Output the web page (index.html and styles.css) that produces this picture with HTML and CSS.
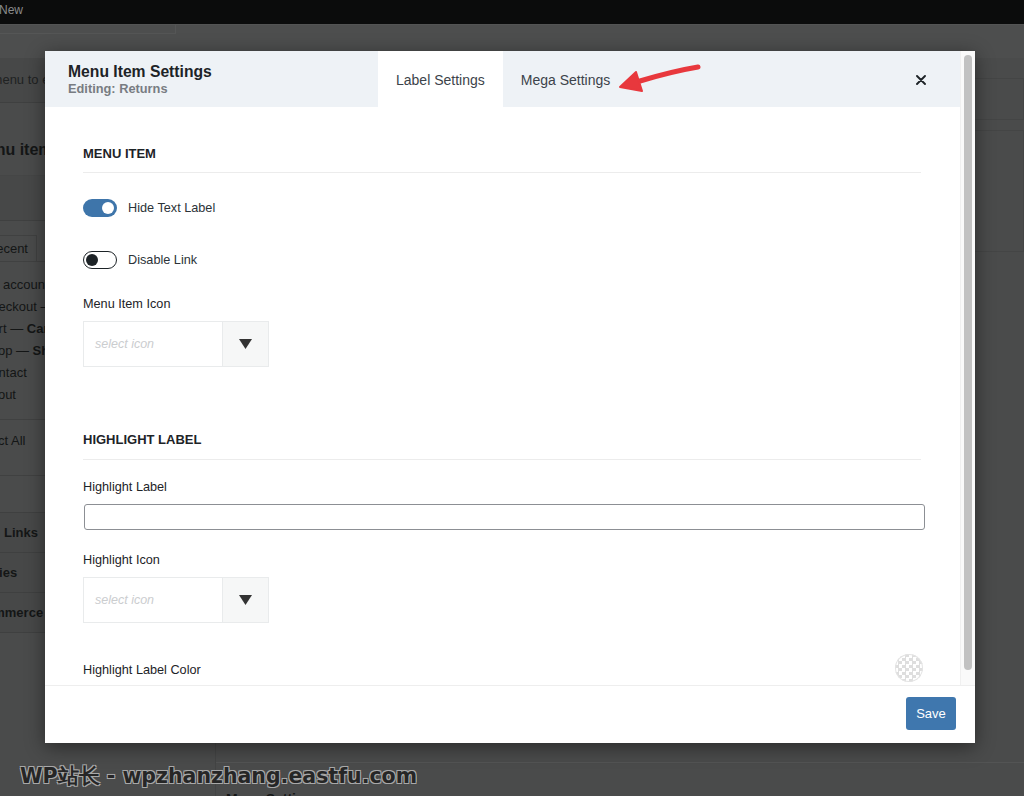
FILE: index.html
```html
<!DOCTYPE html>
<html lang="en">
<head>
    <meta charset="UTF-8">
    <meta name="viewport" content="width=device-width, initial-scale=1.0">
    <title>Menu Item Settings</title>
    <link rel="stylesheet" href="styles.css">
</head>
<body>
    <div class="admin-bar"><span>New</span></div>

    <div class="wp-page">
        <div class="screen-band"><div class="band-box"></div></div>
        <div class="wp-columns">
            <aside class="side">
                <div class="side-row select-row"><span>Select a menu to edit</span></div>
                <div class="side-head"><span>Add menu items</span></div>
                <div class="side-row spacer"></div>
                <div class="side-tabs"><span class="tab-recent">Most Recent</span></div>
                <ul class="page-list">
                    <li>My account</li>
                    <li>Checkout — Checkout</li>
                    <li>Cart — <b>Cart</b></li>
                    <li>Shop — <b>Shop</b></li>
                    <li>Contact</li>
                    <li>About</li>
                </ul>
                <div class="select-all"><span>Select All</span></div>
                <div class="acc first"><span class="acc-links">Custom Links</span></div>
                <div class="acc"><span class="acc-cats">Categories</span></div>
                <div class="acc"><span class="acc-woo">WooCommerce</span></div>
            </aside>
            <main class="edit">
                <div class="edit-box top"></div>
                <div class="edit-box mid"></div>
                <div class="edit-bottom"><span>Mega Settings</span></div>
            </main>
        </div>
    </div>

    <div class="modal">
        <div class="modal-main">
            <div class="modal-scroll">
                <div class="modal-head">
                    <div class="modal-title">
                        <div class="title">Menu Item Settings</div>
                        <div class="subtitle">Editing: Returns</div>
                    </div>
                    <div class="tabs">
                        <div class="tab active">Label Settings</div>
                        <div class="tab">Mega Settings</div>
                    </div>
                    <button class="close" aria-label="Close">
                        <svg width="10" height="10" viewBox="0 0 10 10"><path d="M1 1L9 9M9 1L1 9" stroke="#1d2327" stroke-width="1.9" stroke-linecap="round"/></svg>
                    </button>
                </div>

                <div class="modal-body">
                    <h4 class="section">MENU ITEM</h4>

                    <div class="toggle-row first-toggle">
                        <span class="toggle on"><span class="knob"></span></span>
                        <span>Hide Text Label</span>
                    </div>
                    <div class="toggle-row second-toggle">
                        <span class="toggle off"><span class="knob"></span></span>
                        <span>Disable Link</span>
                    </div>

                    <div class="field-label icon-label">Menu Item Icon</div>
                    <div class="icon-select">
                        <div class="icon-input">select icon</div>
                        <div class="icon-arrow">
                            <svg width="13" height="10" viewBox="0 0 13 10"><path d="M0 0H13L6.5 10Z" fill="#333"/></svg>
                        </div>
                    </div>

                    <h4 class="section highlight">HIGHLIGHT LABEL</h4>

                    <div class="field-label after-section">Highlight Label</div>
                    <input class="text-input" type="text">

                    <div class="field-label after-input">Highlight Icon</div>
                    <div class="icon-select">
                        <div class="icon-input">select icon</div>
                        <div class="icon-arrow">
                            <svg width="13" height="10" viewBox="0 0 13 10"><path d="M0 0H13L6.5 10Z" fill="#333"/></svg>
                        </div>
                    </div>

                    <div class="color-row">
                        <span class="field-label">Highlight Label Color</span>
                        <span class="swatch"></span>
                    </div>
                </div>
            </div>
            <div class="scroll-track"><div class="scroll-thumb"></div></div>
        </div>
        <div class="modal-foot">
            <button class="save">Save</button>
        </div>
    </div>

    <svg class="pointer" width="100" height="44" viewBox="0 0 100 44">
        <path d="M88 11 C70 14 50 19 30 25" stroke="#e8383d" stroke-width="5" fill="none" stroke-linecap="round"/>
        <path d="M10 31 L26 16 L32 35 Z" fill="#e8383d" stroke="#e8383d" stroke-width="2" stroke-linejoin="round"/>
    </svg>

    <div class="watermark">WP站长 - wpzhanzhang.eastfu.com</div>
</body>
</html>
```
FILE: styles.css
```css
html, body {
    margin: 0;
    padding: 0;
}
body {
    width: 1024px;
    height: 796px;
    overflow: hidden;
    background-color: #4a4b4b;
    font-family: "Liberation Sans", Arial, sans-serif;
    color: #1d2327;
    position: relative;
}

/* dimmed admin page behind the modal */
.admin-bar {
    height: 24px;
    background-color: #0b0c0c;
    color: #8a8b8b;
    font-size: 12px;
    line-height: 20px;
}
.admin-bar span {
    margin-left: -1px;
}
.screen-band {
    height: 33px;
    background-color: #4d4e4e;
    border-top: 1px solid #535454;
}
.band-box {
    width: 175px;
    height: 8px;
    border-bottom: 1px solid #555656;
    border-right: 1px solid #555656;
}
.wp-columns {
    display: flex;
}
.side {
    width: 215px;
    border-right: 1px solid #434444;
    color: #141616;
    font-size: 13px;
}
.side-row {
    border-bottom: 1px solid #3f4040;
}
.select-row {
    height: 44px;
    line-height: 44px;
    background-color: #474848;
}
.select-row span {
    margin-left: -59px;
    color: #202222;
}
.side-head {
    height: 72px;
    line-height: 94px;
    font-size: 16px;
    font-weight: bold;
    border-bottom: 1px solid #454646;
}
.side-head span {
    margin-left: -63px;
}
.spacer {
    height: 44px;
    background-color: #474848;
}
.side-tabs {
    height: 40px;
    padding-top: 14px;
    box-sizing: border-box;
}
.tab-recent {
    display: inline-block;
    margin-left: -54px;
    padding: 4px 8px;
    border: 1px solid #404141;
    border-bottom: none;
    line-height: 18px;
}
.page-list {
    list-style: none;
    margin: 0;
    padding: 12px 0 8px 0;
    height: 137px;
    border-top: 1px solid #404141;
    border-bottom: 1px solid #404141;
}
.page-list li {
    margin-left: -18px;
    line-height: 22px;
}
.select-all {
    height: 55px;
    line-height: 42px;
    border-bottom: 1px solid #404141;
}
.select-all span {
    margin-left: -28px;
}
.acc {
    height: 39px;
    line-height: 39px;
    font-weight: bold;
    border-bottom: 1px solid #3f4040;
    background-color: #474848;
}
.acc.first {
    margin-top: 36px;
    border-top: 1px solid #3f4040;
}
.acc-links { margin-left: -48px; }
.acc-cats { margin-left: -50px; }
.acc-woo { margin-left: -52px; }

.edit {
    flex: 1;
    padding-left: 10px;
}
.edit-box {
    border: 1px solid #444545;
}
.edit-box.top {
    height: 40px;
    margin-top: 20px;
}
.edit-box.mid {
    height: 120px;
    margin-top: 10px;
}
.edit-bottom {
    margin-top: 510px;
    margin-left: -10px;
    border-top: 1px solid #535454;
    padding: 28px 0 0 10px;
    font-size: 14px;
    font-weight: bold;
    color: #141616;
}

/* modal */
.modal {
    position: absolute;
    left: 45px;
    top: 51px;
    width: 930px;
    height: 692px;
    background-color: #fff;
    box-shadow: 0 4px 18px rgba(0, 0, 0, 0.45);
    display: flex;
    flex-direction: column;
}
.modal-main {
    display: flex;
    height: 634px;
}
.modal-scroll {
    flex: 1;
    overflow: hidden;
}
.modal-head {
    display: flex;
    align-items: stretch;
    height: 56px;
    background-color: #eef2f6;
}
.modal-title {
    width: 310px;
    padding: 12px 0 0 23px;
}
.title {
    font-size: 15.7px;
    font-weight: bold;
    line-height: 18px;
}
.subtitle {
    font-size: 12.8px;
    font-weight: bold;
    color: #787c82;
    line-height: 16px;
}
.tabs {
    display: flex;
    flex: 1;
}
.tab {
    padding: 0 18px;
    line-height: 58px;
    font-size: 14px;
    color: #3c434a;
}
.tab.active {
    background-color: #fff;
}
.close {
    width: 44px;
    margin-right: 17px;
    border: none;
    background: none;
    padding: 2px 0 0 0;
    cursor: pointer;
    display: flex;
    align-items: center;
    justify-content: center;
}
.modal-body {
    padding: 39px 39px 0 38px;
    height: 539px;
    overflow: hidden;
}
.section {
    margin: 0;
    font-size: 13px;
    line-height: 16px;
    font-weight: bold;
    color: #1d2327;
    padding-bottom: 10px;
    border-bottom: 1px solid #ececec;
}
.section.highlight {
    margin-top: 65px;
    padding-bottom: 11px;
}
.toggle-row {
    display: flex;
    align-items: center;
    gap: 11px;
    height: 18px;
    font-size: 12.7px;
    color: #2c3338;
}
.first-toggle {
    margin-top: 26px;
}
.second-toggle {
    margin-top: 34px;
}
.toggle {
    width: 34px;
    height: 18px;
    border-radius: 9px;
    box-sizing: border-box;
    display: flex;
    align-items: center;
}
.toggle.on {
    background-color: #3e75aa;
    justify-content: flex-end;
    padding-right: 3px;
}
.toggle.on .knob {
    width: 12px;
    height: 12px;
    border-radius: 50%;
    background-color: #fff;
}
.toggle.off {
    border: 1.5px solid #1d2327;
    padding-left: 2px;
}
.toggle.off .knob {
    width: 12px;
    height: 12px;
    border-radius: 50%;
    background-color: #1d2327;
}
.field-label {
    font-size: 12.7px;
    line-height: 16px;
    color: #1d2327;
}
.icon-label {
    margin-top: 27px;
}
.after-section {
    margin-top: 19px;
}
.after-input {
    margin-top: 22px;
}
.icon-select {
    display: flex;
    width: 186px;
    height: 46px;
    margin: 9px 0 1px 0;
    border: 1px solid #e9ebec;
    box-sizing: border-box;
}
.icon-input {
    flex: 1;
    padding-left: 11px;
    line-height: 44px;
    font-size: 12.5px;
    font-style: italic;
    color: #cbcdcf;
}
.icon-arrow {
    width: 45px;
    border-left: 1px solid #e9ebec;
    background-color: #f6f7f7;
    display: flex;
    align-items: center;
    justify-content: center;
}
.text-input {
    display: block;
    width: calc(100% + 3px);
    height: 26px;
    margin: 9px 0 0 1px;
    box-sizing: border-box;
    border: 1px solid #8c8f94;
    border-radius: 3px;
    font-family: inherit;
}
.color-row {
    display: flex;
    align-items: center;
    justify-content: space-between;
    margin-top: 31px;
    height: 28px;
}
.color-row .field-label {
    padding-top: 4px;
}
.swatch {
    width: 28px;
    height: 28px;
    border-radius: 50%;
    margin-right: -2px;
    background: repeating-conic-gradient(#dedede 0 25%, #fff 0 50%) 0 0 / 7px 7px;
    box-shadow: inset 0 0 0 1px #e4e4e4;
}
.scroll-track {
    width: 15px;
    background-color: #fafafa;
    border-left: 1px solid #f0f0f0;
    box-sizing: border-box;
    padding: 4px 3px 15px 3px;
}
.scroll-thumb {
    height: 100%;
    background-color: #c2c2c2;
    border-radius: 4px;
}
.modal-foot {
    flex: 1;
    border-top: 1px solid #eeeeee;
    display: flex;
    justify-content: flex-end;
    align-items: flex-start;
    padding: 11px 19px 0 0;
}
.save {
    width: 50px;
    height: 33px;
    border: none;
    border-radius: 3px;
    background-color: #3f77ae;
    color: #fff;
    font-family: inherit;
    font-size: 13px;
    cursor: pointer;
}

/* annotation and watermark drawn over the screenshot */
.pointer {
    position: absolute;
    left: 610px;
    top: 56px;
}
.watermark {
    position: absolute;
    left: 20px;
    top: 762px;
    font-family: "DejaVu Sans", sans-serif;
    font-weight: bold;
    font-size: 20.5px;
    color: #262626;
    text-shadow: -1px -1px 0 #a8a8a8, 1px -1px 0 #a8a8a8, -1px 1px 0 #a8a8a8, 1px 1px 0 #a8a8a8;
}
```
